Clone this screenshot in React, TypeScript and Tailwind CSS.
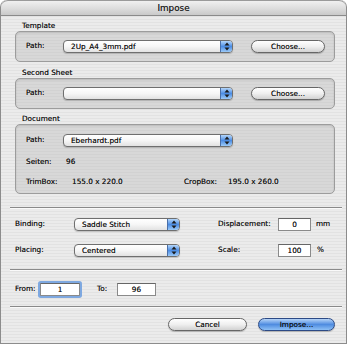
import React from "react";

const Arrows = () => (
  <svg width="6" height="9" viewBox="0 0 6 9">
    <path d="M3 0.5 L5.5 3.5 L0.5 3.5 Z" fill="#1a1a1a" />
    <path d="M3 8.5 L5.5 5.5 L0.5 5.5 Z" fill="#1a1a1a" />
  </svg>
);

const Popup = ({ w, text }: { w: string; text: string }) => (
  <div
    className={`${w} h-[13px] rounded-[4px] border border-[#6f6f6f] bg-gradient-to-b from-white via-[#f6f6f6] to-[#e2e2e2] shadow-[0_1px_1px_rgba(0,0,0,0.18)] flex items-stretch overflow-hidden`}
  >
    <div className="flex-1 flex items-center pl-[7px] text-[7.3px] leading-none text-[#111]">{text}</div>
    <div className="w-[12px] border-l border-[#4a6fa8] bg-gradient-to-b from-[#b4d6fa] via-[#4c8de4] to-[#9ccaf7] flex items-center justify-center">
      <Arrows />
    </div>
  </div>
);

const PillButton = ({ w, text, blue }: { w: string; text: string; blue?: boolean }) => (
  <div
    className={`${w} h-[13px] rounded-full border flex items-center justify-center text-[7.3px] leading-none text-[#111] shadow-[0_1px_1px_rgba(0,0,0,0.22)] ${
      blue
        ? "border-[#2c4a85] bg-gradient-to-b from-[#b6d4f7] via-[#4f8ce0] to-[#8ec0f5]"
        : "border-[#666] bg-gradient-to-b from-white via-[#efefef] to-[#d2d2d2]"
    }`}
  >
    {text}
  </div>
);

const Field = ({ w, value, focus }: { w: string; value: string; focus?: boolean }) => (
  <div
    className={`${w} h-[13px] bg-white border border-[#8a8a8a] border-t-[#666] flex items-center justify-center text-[7.3px] leading-none text-[#111] ${
      focus ? "ring-2 ring-[#7ea8e0] rounded-[1px]" : ""
    }`}
  >
    {value}
  </div>
);

const groupCls =
  "w-[320px] rounded-[5px] border border-[#9c9c9c] bg-[repeating-linear-gradient(0deg,#d8d8d8_0px,#d8d8d8_2px,#d2d2d2_2px,#d2d2d2_3px)] shadow-[inset_0_1px_2px_rgba(0,0,0,0.14)]";

const Sep = () => (
  <div className="ml-[-5px] w-[332px] h-[2px] border-t border-[#8a8a8a] border-b border-b-[#fafafa]" />
);

export default function App() {
  return (
    <div className="w-[350px] h-[345px] bg-white overflow-hidden font-['DejaVu_Sans',sans-serif] text-[7.3px] text-[#111] [text-shadow:0_0_0.35px_rgba(0,0,0,0.6)]">
      <div className="w-[347px] h-[344px] rounded-t-[7px] overflow-hidden border-x border-b border-[#8c8c8c] bg-[repeating-linear-gradient(0deg,#ebebeb_0px,#ebebeb_2px,#e2e2e2_2px,#e2e2e2_3px)]">
        <div className="h-[16px] rounded-t-[7px] border-t border-[#9a9a9a] border-b border-b-[#8a8a8a] bg-gradient-to-b from-[#f0f0f0] via-[#dedede] to-[#c9c9c9] flex items-center justify-center text-[8.8px] leading-none text-[#222]">
          Impose
        </div>
        <div className="pl-[14px]">
          <div className="mt-[5px] h-[10px] leading-[10px] pl-[7px]">Template</div>
          <div className={`${groupCls} h-[31px] flex items-center pl-[10px]`}>
            <div className="w-[37px]">Path:</div>
            <Popup w="w-[170px]" text="2Up_A4_3mm.pdf" />
            <div className="ml-[18px]">
              <PillButton w="w-[74px]" text="Choose..." />
            </div>
          </div>

          <div className="mt-[6px] h-[10px] leading-[10px] pl-[7px]">Second Sheet</div>
          <div className={`${groupCls} h-[31px] flex items-center pl-[10px]`}>
            <div className="w-[37px]">Path:</div>
            <Popup w="w-[170px]" text="" />
            <div className="ml-[18px]">
              <PillButton w="w-[74px]" text="Choose..." />
            </div>
          </div>

          <div className="mt-[5px] h-[10px] leading-[10px] pl-[7px]">Document</div>
          <div className={`${groupCls} h-[70px] flex flex-col pl-[10px] pt-[9px]`}>
            <div className="flex items-center h-[13px]">
              <div className="w-[37px]">Path:</div>
              <Popup w="w-[170px]" text="Eberhardt.pdf" />
            </div>
            <div className="flex items-center h-[10px] mt-[10px]">
              <div className="w-[40px]">Seiten:</div>
              <div>96</div>
            </div>
            <div className="flex items-center h-[10px] mt-[10px]">
              <div className="w-[46px]">TrimBox:</div>
              <div className="w-[112px]">155.0 x 220.0</div>
              <div className="w-[44px]">CropBox:</div>
              <div>195.0 x 260.0</div>
            </div>
          </div>

          <div className="mt-[13px]">
            <Sep />
          </div>

          <div className="mt-[9px] flex items-center h-[13px]">
            <div className="w-[59px]">Binding:</div>
            <Popup w="w-[106px]" text="Saddle Stitch" />
            <div className="ml-[38px] w-[60px]">Displacement:</div>
            <Field w="w-[33px]" value="0" />
            <div className="ml-[5px]">mm</div>
          </div>
          <div className="mt-[13px] flex items-center h-[13px]">
            <div className="w-[59px]">Placing:</div>
            <Popup w="w-[106px]" text="Centered" />
            <div className="ml-[38px] w-[60px]">Scale:</div>
            <Field w="w-[33px]" value="100" />
            <div className="ml-[6px]">%</div>
          </div>

          <div className="mt-[12px]">
            <Sep />
          </div>

          <div className="mt-[12px] flex items-center h-[13px]">
            <div className="w-[25px]">From:</div>
            <Field w="w-[40px]" value="1" focus />
            <div className="ml-[17px] w-[20px]">To:</div>
            <Field w="w-[39px]" value="96" />
          </div>

          <div className="mt-[10px]">
            <Sep />
          </div>

          <div className="mt-[10px] w-[320px] flex justify-end gap-[11px]">
            <PillButton w="w-[79px]" text="Cancel" />
            <PillButton w="w-[77px]" text="Impose..." blue />
          </div>
        </div>
      </div>
    </div>
  );
}
